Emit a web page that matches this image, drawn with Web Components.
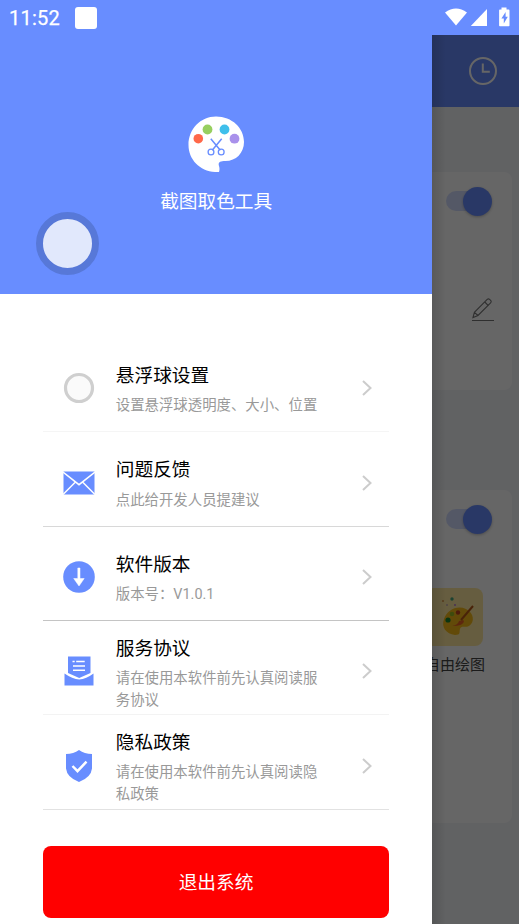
<!DOCTYPE html>
<html lang="zh-CN">
<head>
<meta charset="utf-8">
<title>截图取色工具</title>
<style>
html,body{margin:0;height:100%;overflow:hidden}
body{font-family:Roboto,"Noto Sans CJK SC",sans-serif;--blue:#688dff}
</style>
</head>
<body>
<app-screen>
  <status-bar slot="status">11:52</status-bar>
  <back-page slot="page"></back-page>
  <side-drawer slot="drawer">
    <menu-row icon="ball" label="悬浮球设置" line="#f5f5f5">设置悬浮球透明度、大小、位置</menu-row>
    <menu-row icon="mail" label="问题反馈" line="#d8d8d8">点此给开发人员提建议</menu-row>
    <menu-row icon="down" label="软件版本" line="#c4c4c4">版本号：V1.0.1</menu-row>
    <menu-row icon="doc" label="服务协议" line="#f3f3f3">请在使用本软件前先认真阅读服务协议</menu-row>
    <menu-row icon="shield" label="隐私政策" line="#e2e2e2">请在使用本软件前先认真阅读隐私政策</menu-row>
    <exit-button slot="action">退出系统</exit-button>
  </side-drawer>
  <floating-ball slot="ball"></floating-ball>
</app-screen>
<script>
function define(name, html, setup) {
  const t = document.createElement('template');
  t.innerHTML = html;
  customElements.define(name, class extends HTMLElement {
    constructor() {
      super();
      this.attachShadow({mode: 'open'}).append(t.content.cloneNode(true));
    }
    connectedCallback() { if (setup) setup(this, this.shadowRoot); }
  });
}

define('app-screen', `<style>
:host{display:grid;position:relative;grid-template-rows:35px 1fr;width:519px;height:924px;overflow:hidden;background:var(--blue)}
::slotted([slot=drawer]){position:absolute;left:0;top:35px;bottom:0;width:432.4px}
::slotted([slot=ball]){position:absolute;left:36px;top:212px}
</style><slot name="status"></slot><slot name="page"></slot><slot name="drawer"></slot><slot name="ball"></slot>`);

define('status-bar', `<style>
:host{display:flex;align-items:center;height:35px;box-sizing:border-box;padding:0 8px 0 9px;color:#fff;font-size:20px;font-weight:400;letter-spacing:.25px;-webkit-text-stroke:.25px #fff}
.app{width:22px;height:22px;border-radius:3px;background:#fff;margin-left:auto}
.t{display:flex;width:88px;align-items:center}
.sp{flex:1} svg{display:block}
</style><span class="t"><slot></slot><span class="app"></span></span><span class="sp"></span>
<svg width="68" height="22" viewBox="443 7 68 22" fill="#fff">
<path d="M445 12.4Q456 4.6 467 12.4L456 25.6Z"/>
<path d="M487 9v17h-16.200Z"/>
<path fill-rule="evenodd" d="M501.500 7.500h5v2.100h2.200q.8 0 .8.800v15q0 .8-.8.800h-8.800q-.8 0-.8-.8v-15q0-.8.800-.8h1.600zM505.600 12l-4.200 6.600h2.400v5l4-6.800h-2.200z"/>
</svg>`);

define('switch-toggle', `<style>
:host{display:block;position:relative;width:46px;height:30px}
i{position:absolute;border-radius:20px}
.track{left:0;top:5px;width:40px;height:20px;background:#d3ddff}
.thumb{right:0;top:.5px;width:29px;height:29px;background:var(--blue);box-shadow:0 1px 3px #0004}
</style><i class="track"></i><i class="thumb"></i>`);

define('page-card', `<style>
:host{display:flex;flex-direction:column;align-items:flex-end;box-sizing:border-box;margin:0 7px;padding:14px 20px 0;background:#fff;border-radius:8px}
</style><slot></slot>`);

define('back-page', `<style>
:host{display:flex;flex-direction:column;position:relative;background:#f2f4f8}
header{display:flex;align-items:center;justify-content:flex-end;height:72px;flex:none;background:var(--blue);padding-right:21px}
svg{display:block}
.one{height:218px;margin-top:65px}.two{height:333px;margin-top:100px}
.edit{margin-top:80px;margin-right:-2px}
.tool{display:flex;flex-direction:column;align-items:center;margin:54px -6px 0 0;color:#444;font-size:15px;line-height:22px;width:86px}
.tool svg{margin:0 0 8px -2px}
.shade{position:absolute;inset:0;background:linear-gradient(90deg,transparent 432px,rgba(0,0,0,.12) 432px,transparent 446px),rgba(0,0,0,.6)}
</style>
<header><svg width="30" height="30" viewBox="0 0 30 30" fill="none" stroke="#fff" stroke-width="2"><circle cx="15" cy="15" r="13"/><path d="M14.800 7.500v8.300h7"/></svg></header>
<page-card class="one"><switch-toggle></switch-toggle>
<svg class="edit" width="24" height="26" viewBox="0 0 24 26" fill="none" stroke="#777" stroke-width="1.100"><path d="M2 24.500h22M3 21.500l1.400-5.200L17.200 3.400q1.200-1.100 2.400 0l1 1q1.200 1.200 0 2.400L8 19.500zM14.800 6l3.700 3.800M4.400 16.300L8 19.500"/></svg>
</page-card>
<page-card class="two"><switch-toggle></switch-toggle>
<div class="tool"><svg width="62" height="58" viewBox="423 588 62 58"><rect x="425" y="588" width="58" height="58" rx="8" fill="#ffe9a0"/>
<path fill="#f5ba18" d="M444 619c3-9 13-14 22-10 8 4 9 13 3 17-4 2-8-1-9 3-1 3 1 6-5 6-9-1-14-8-11-16z"/>
<circle cx="448" cy="620" r="2.600" fill="#19852b"/><circle cx="452" cy="614" r="2.300" fill="#9cbc22"/><circle cx="458" cy="612.500" r="2.200" fill="#c24420"/>
<path d="M452 626q6-1 7-5l4-1 1 1q0 5-12 5z" fill="#e96325"/><path d="M461 620l12-14" stroke="#b75716" stroke-width="2"/>
<circle cx="452" cy="599" r="1.700" fill="#48a67a"/><circle cx="443" cy="601" r="1" fill="#db9144"/><circle cx="447" cy="605" r=".8" fill="#967bb4"/><circle cx="455" cy="605" r="1" fill="#b77bd0"/></svg><span>自由绘图</span></div>
</page-card><div class="shade"></div>`);

define('palette-logo', `<style>:host{display:block}svg{display:block}</style>
<svg width="56" height="56" viewBox="188 116 56 56"><path fill="#fff" d="M216 116.500c16 0 28 11.500 28 25.500 0 11-8 19-18.500 19-6.500 0-7.500 2-6.500 5q1 3 0 6c-17.500 1-30.500-11.500-30.500-27 0-16 12-28.500 27.500-28.500z"/>
<circle cx="198.300" cy="138.700" r="4.800" fill="#ff6849"/><circle cx="207.500" cy="129.500" r="4.900" fill="#97cf5f"/><circle cx="224.500" cy="129.500" r="4.900" fill="#3fbfeb"/><circle cx="234.500" cy="138.700" r="4.900" fill="#a991eb"/>
<g fill="none" stroke="#688dff" stroke-width="1.300"><circle cx="211" cy="152" r="2.900"/><circle cx="221.200" cy="152" r="2.900"/></g><path d="M210.800 138.700l9.500 11.500M221.700 138.700L212.200 150.200" stroke="#688dff" stroke-width="1.500"/></svg>`);

define('side-drawer', `<style>
:host{display:flex;flex-direction:column;background:#fff;box-sizing:border-box}
header{height:259.400px;flex:none;box-sizing:border-box;padding-top:81px;background:var(--blue);display:flex;flex-direction:column;align-items:center;color:#fff;font-size:18.700px;line-height:28px}
header span{margin-top:16px}
nav{display:block;margin:43.500px 43.400px 0 43px}
.foot{padding:36.300px 43.400px 0 43px}
</style><header><palette-logo></palette-logo><span>截图取色工具</span></header><nav><slot></slot></nav><div class="foot"><slot name="action"></slot></div>`);

const icons = {
  ball: '<circle cx="16" cy="16" r="13.500" fill="#fafafa" stroke="#cfcfcf" stroke-width="3.200"/>',
  mail: '<rect x=".5" y="4.500" width="31" height="23" fill="#688dff"/><path d="M0 5l16 12.700L32 5M0 27.500l12.200-12.300M32 27.500L19.800 15.200" fill="none" stroke="#fff" stroke-width="1.500"/>',
  down: '<circle cx="16" cy="16" r="15.800" fill="#688dff"/><path d="M14.800 7h2.200v10.500h4.200L16 25l-5.300-7.500h4.100z" fill="#fff" stroke="#fff" stroke-width=".5" stroke-linejoin="round"/>',
  doc: '<path d="M5 1.500h22.500V18l-11.300 5L5 18zM1.500 18.500q8 5.500 14.700 6 7-.5 14.300-6v12h-29z" fill="#688dff"/><path d="M9.500 6.500h2.200M13.200 6.500h8.500M10 11h12M10 15.200h12" stroke="#fff" stroke-width="1.500"/>',
  shield: '<path d="M16 0q5.500 4 13 4v14.500Q28 27.500 16 32 4 27.500 3 18.500V4q7.500 0 13-4z" fill="#688dff"/><path d="M9.500 16l5 5.200 9-9.600" fill="none" stroke="#fff" stroke-width="2.500"/>'
};

define('menu-row', `<style>
:host{display:grid;grid-template-columns:52.500px 205px 1fr;align-items:center;height:94.350px;box-sizing:border-box;padding:7.500px 16px 0 20.300px;border-bottom:1px solid #ddd}
svg{display:block}.go{justify-self:end}
.txt{padding-top:3.500px}
h3{margin:0 0 4.500px;font-size:18.700px;line-height:27.600px;font-weight:400;color:#000}
p{margin:0;font-size:14.400px;line-height:21.800px;font-weight:400;color:#999}
:host([icon=doc]) .txt,:host([icon=shield]) .txt{padding-top:5px}
</style><svg class="ic" width="32" height="32" viewBox="0 0 32 32"></svg><div class="txt"><h3></h3><p><slot></slot></p></div>
<svg class="go" width="12" height="18" viewBox="0 0 12 18" fill="none" stroke="#ccc" stroke-width="2"><path d="M2 2l7.500 7L2 16"/></svg>`,
(el, root) => {
  root.querySelector('.ic').innerHTML = icons[el.getAttribute('icon')];
  root.querySelector('h3').textContent = el.getAttribute('label');
  el.style.borderBottomColor = el.getAttribute('line');
});

define('exit-button', `<style>
:host{display:flex;align-items:center;justify-content:center;height:72px;border-radius:8px;background:#f00;color:#fff;font-size:18.700px;line-height:28px;box-sizing:border-box;padding-top:2px}
</style><slot></slot>`);

define('floating-ball', `<style>
:host{display:block;box-sizing:border-box;width:63px;height:63px;border-radius:50%;border:7px solid #5778d8;background:#e1e8fc}
</style>`);
</script>
</body>
</html>
